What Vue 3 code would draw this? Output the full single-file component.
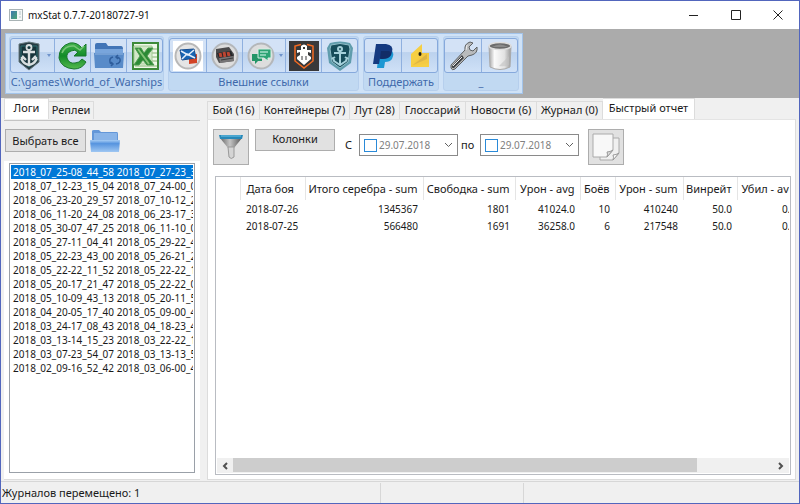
<template>
  <div class="window">
    <header class="titlebar">
      <svg class="app-icon" width="14" height="12" viewBox="0 0 14 12">
        <defs>
          <linearGradient id="app-fill" x1="0" y1="0" x2="1" y2="1">
            <stop offset="0" stop-color="#3f78b0" />
            <stop offset="1" stop-color="#4ca673" />
          </linearGradient>
        </defs>
        <rect x="0.5" y="0.5" width="13" height="11" fill="#f5f7f7" stroke="#a9b3b5" />
        <rect x="2" y="2" width="6" height="8" fill="url(#app-fill)" />
        <path d="M10 3h2M10 5h2M10 8h2" stroke="#b6c6c9" />
      </svg>
      <h1 class="title">mxStat 0.7.7-20180727-91</h1>
      <div class="window-controls">
        <button type="button" aria-label="Свернуть">
          <svg width="12" height="12" viewBox="0 0 12 12"><path d="M1 6.5h9" /></svg>
        </button>
        <button type="button" aria-label="Развернуть">
          <svg width="12" height="12" viewBox="0 0 12 12"><path d="M1.500 1.500h9v9h-9z" /></svg>
        </button>
        <button type="button" aria-label="Закрыть">
          <svg width="12" height="12" viewBox="0 0 12 12"><path d="M1.500 1.500l9 9M10.500 1.500l-9 9" /></svg>
        </button>
      </div>
    </header>

    <div class="ribbon-area">
      <div class="ribbon">
        <section class="group">
          <div class="tools">
            <button type="button" class="tool with-arrow" aria-label="Клиент игры">
              <svg width="30" height="30" viewBox="0 0 30 30">
                <path d="M5 3l10-2 10 2v18l-10 8-10-8z" fill="#263b43" stroke="#687b80" />
                <path d="M7 5h16v15l-8 6-8-6z" fill="#17343b" stroke="#2d6f73" />
                <circle cx="15" cy="6.500" r="2.500" fill="none" stroke="#d9dfe0" stroke-width="1.800" />
                <path d="M15 9v15M9 11h12M8 16v3q2 4 7 5q5-1 7-5v-3M7 19l2-3 3 3M18 19l3-3 2 3" fill="none" stroke="#d9dfe0" stroke-width="2.400" />
              </svg>
              <span class="arrow"></span>
            </button>
            <button type="button" class="tool" aria-label="Обновить">
              <svg width="30" height="30" viewBox="0 0 30 30">
                <defs>
                  <linearGradient id="green-fill" x1="0" y1="0" x2="0" y2="1">
                    <stop offset="0" stop-color="#43b34d" />
                    <stop offset="0.500" stop-color="#118b27" />
                    <stop offset="1" stop-color="#54b94f" />
                  </linearGradient>
                </defs>
                <path d="M28 3v12H16l4-4q-3-3-7-1q-5 2-4 7q2 6 8 5q4 0 7-4l4 3q-4 7-12 7Q3 27 1 17Q1 5 12 2q7-1 12 5z" fill="url(#green-fill)" stroke="#18762c" />
                <path d="M4 12q3-8 12-7l6 4 4-4" fill="none" stroke="#78c678" stroke-width="1.500" />
              </svg>
            </button>
            <button type="button" class="tool" aria-label="Папка журналов">
              <svg width="30" height="30" viewBox="0 0 30 30">
                <path d="M1 4q0-2 2-2h9l2 3h13q2 0 2 3v19H1z" fill="#4275b7" />
                <path d="M1 8h28v5H1z" fill="#78a5dc" />
                <path d="M0 12h30l-1 15H1z" fill="#588bc9" />
                <path d="M1 13h28" stroke="#8eb3e0" />
                <path d="M19 16q-4 1-3 5q0 2 3 2M17 25l2-2-2-2M22 23q5-1 4-5q-1-2-4-2M24 14l-2 2 2 2" fill="none" stroke="#2e5d9c" stroke-width="1.500" />
              </svg>
            </button>
            <button type="button" class="tool" aria-label="Экспорт в Excel">
              <svg width="30" height="30" viewBox="0 0 30 30">
                <rect x="3" y="2" width="25" height="26" fill="#eff7e9" stroke="#3d8a3a" stroke-width="2" />
                <path d="M22 8h5M22 12h5M22 16h5M22 20h5M5 25h22" stroke="#86b674" />
                <path d="M4 5h18v18H4z" fill="#d3e8c9" stroke="#a4cc96" />
                <path d="M5 7h6l3 5 4-5h5l-6 8 7 9h-7l-4-5-4 5H4l6-9z" fill="#2b8a36" stroke="#4f9c50" />
                <path d="M8 8l11 15" stroke="#86c478" stroke-width="2" />
              </svg>
            </button>
          </div>
          <span class="group-label">C:\games\World_of_Warships</span>
        </section>

        <section class="group">
          <div class="tools">
            <button type="button" class="tool" aria-label="Почта">
              <svg width="30" height="30" viewBox="0 0 30 30">
                <rect width="30" height="30" fill="#fff" />
                <circle cx="15" cy="15" r="12.500" fill="#e5e5e5" stroke="#b8b8b8" stroke-width="2" />
                <path d="M16 15l8-2v9l-8 1z" fill="#d24325" />
                <path d="M7 9l14-1 2 9-14 2z" fill="#1765b4" stroke="#164d90" />
                <path d="M8 10l7 4 6-5M9 18l5-5 8 4" fill="none" stroke="#e3eefa" stroke-width="1.500" />
              </svg>
            </button>
            <button type="button" class="tool" aria-label="Контейнеры">
              <svg width="30" height="30" viewBox="0 0 30 30">
                <circle cx="15" cy="15" r="12.500" fill="#ddd" stroke="#b4b7ba" stroke-width="2" />
                <path d="M6 8l13-2 5 7v7l-15 2-3-6z" fill="#4b4a4b" />
                <path d="M7 12l14-2 2 5-14 2z" fill="#252729" />
                <path d="M10 12l1 4M14 11l1 5M18 11l1 4" stroke="#bb4532" stroke-width="3" />
                <path d="M9 17l15-2v5l-14 2z" fill="#777576" />
                <path d="M11 19l12-2" stroke="#393a3b" />
              </svg>
            </button>
            <button type="button" class="tool with-arrow" aria-label="Форум">
              <svg width="30" height="30" viewBox="0 0 30 30">
                <circle cx="15" cy="15" r="12.500" fill="#ddd" stroke="#b4b7ba" stroke-width="2" />
                <path d="M6 13h10v7h-4l-3 3v-3H6z" fill="#249567" />
                <path d="M12 8h13v9h-3v3l-4-3h-6z" fill="#2ca374" stroke="#d6eee4" />
                <path d="M14 11h8M14 14h6" stroke="#a4dec8" stroke-width="1.500" />
              </svg>
              <span class="arrow"></span>
            </button>
            <button type="button" class="tool" aria-label="Сайт статистики">
              <svg width="30" height="30" viewBox="0 0 30 30">
                <rect width="30" height="30" fill="#38383a" />
                <path d="M12 3.500L6 5v15l9 7 9-7V5l-6-1.500" fill="none" stroke="#f36a22" stroke-width="1.500" />
                <path d="M12 5q3-3 6 0v4h4v9l-7 6-7-6V9h4z" fill="#fff" />
                <path d="M8 12l3-1v3l-3 2zM22 12l-3-1v3l3 2z" fill="#38383a" />
                <path d="M14 6h2v2h-2z" fill="#38383a" />
                <path d="M13 15v4M17 15v4" stroke="#38383a" />
              </svg>
            </button>
            <button type="button" class="tool" aria-label="Портал">
              <svg width="30" height="30" viewBox="0 0 30 30">
                <path d="M5 2q10-3 20 0l3 5-2 15-11 8-11-8L2 7z" fill="#5f9cac" />
                <path d="M6 4q9-3 18 0l1 4-2 13-8 6-8-6L5 8z" fill="#164c5a" stroke="#90bec9" />
                <circle cx="15" cy="8" r="2" fill="none" stroke="#a5d0da" stroke-width="2" />
                <path d="M15 10v14M9 12h12M8 16l1 4 6 4 6-4 1-4M7 18l3-2M20 16l3 2" fill="none" stroke="#a5d0da" stroke-width="2" />
              </svg>
            </button>
          </div>
          <span class="group-label">Внешние ссылки</span>
        </section>

        <section class="group">
          <div class="tools">
            <button type="button" class="tool" aria-label="PayPal">
              <svg width="30" height="30" viewBox="0 0 30 30">
                <path d="M11 9h12q4 3 1 9q-2 3-7 3l-1 6h-7z" fill="#1d98d3" />
                <path d="M8 3h10q8 1 6 8q-1 6-9 6h-3l-1 6H5z" fill="#153a80" />
                <path d="M13 10h8q3 2 2 4-2 4-8 4h-3z" fill="#122d67" />
              </svg>
            </button>
            <button type="button" class="tool" aria-label="Яндекс.Деньги">
              <svg width="30" height="30" viewBox="0 0 30 30">
                <path d="M6 13L17 3v10h7v13H6z" fill="#f6cf43" />
                <path d="M8 24l14-11-2 7-12 4z" fill="#d6a72e" />
                <path d="M17 12h7v10L7 25z" fill="#f4ca43" />
                <path d="M8 24l14-6v-5z" fill="#c6a047" opacity="0.500" />
                <ellipse cx="15" cy="13" rx="1.500" ry="2" fill="#242116" />
              </svg>
            </button>
          </div>
          <span class="group-label">Поддержать</span>
        </section>

        <section class="group">
          <div class="tools">
            <button type="button" class="tool" aria-label="Настройки">
              <svg width="30" height="30" viewBox="0 0 30 30">
                <path d="M3 24L17 9q-1-6 5-8l3 1-4 4 1 3 3 1 4-4q1 6-5 8l-4 1L7 28q-3 2-4-1z" fill="#b9bbbd" stroke="#5d6062" />
                <path d="M4 25L14 14l2 3L6 27q-3 0-2-2z" fill="#3e4144" />
                <path d="M5 25l9-9M18 9l1-5" stroke="#eee" />
              </svg>
            </button>
            <button type="button" class="tool" aria-label="Очистить">
              <svg width="30" height="30" viewBox="0 0 30 30">
                <defs>
                  <linearGradient id="bin-fill">
                    <stop offset="0" stop-color="#a5a5a5" />
                    <stop offset="0.250" stop-color="#fafafa" />
                    <stop offset="0.700" stop-color="#e2e2e2" />
                    <stop offset="1" stop-color="#999" />
                  </linearGradient>
                </defs>
                <path d="M4 5h22l-1 21q-10 5-20 0z" fill="url(#bin-fill)" stroke="#aaa" />
                <ellipse cx="15" cy="5" rx="11" ry="3.500" fill="#6b6b6b" stroke="#ddd" stroke-width="1.500" />
                <path d="M7 6q8-5 16 0" fill="#8b8b8b" />
                <path d="M14 25l10-10v9q-5 2-10 1z" fill="#c2c2c2" opacity="0.600" />
              </svg>
            </button>
          </div>
          <span class="group-label">_</span>
        </section>
      </div>
    </div>

    <main class="workspace">
      <aside class="logs">
        <nav class="tabs log-tabs">
          <button type="button" class="tab active">Логи</button>
          <button type="button" class="tab">Реплеи</button>
        </nav>
        <div class="logs-toolbar">
          <button type="button" class="push select-all">Выбрать все</button>
          <button type="button" class="open-folder" aria-label="Открыть папку">
            <svg width="30" height="26" viewBox="0 0 30 26">
              <defs>
                <linearGradient id="folder-fill" x1="0" y1="0" x2="0" y2="1">
                  <stop offset="0" stop-color="#a6ccf4" />
                  <stop offset="0.300" stop-color="#5694df" />
                  <stop offset="1" stop-color="#9fc7f2" />
                </linearGradient>
              </defs>
              <path d="M2 12V2q0-1 2-1h5l2 2h16q1 0 1 2v7z" fill="#6497d8" />
              <path d="M4 4h23v8H4z" fill="#89b4e8" />
              <path d="M0 11h30l-1 12H1z" fill="url(#folder-fill)" />
            </svg>
          </button>
        </div>
        <div class="logs-body">
          <ul class="log-list" role="listbox" aria-label="Логи">
            <li
              v-for="(log, index) in logs"
              :key="log"
              role="option"
              :aria-selected="index === selectedLog"
              :class="{ selected: index === selectedLog }"
              @click="selectedLog = index"
            >{{ log }}</li>
          </ul>
        </div>
      </aside>

      <section class="report">
        <nav class="tabs report-tabs">
          <button
            v-for="tab in tabs"
            :key="tab"
            type="button"
            class="tab"
            :class="{ active: tab === activeTab }"
            @click="activeTab = tab"
          >{{ tab }}</button>
        </nav>
        <div class="report-page">
          <div class="filters">
            <button type="button" class="push square" aria-label="Фильтр">
              <svg width="26" height="28" viewBox="0 0 26 28">
                <defs>
                  <linearGradient id="funnel-fill">
                    <stop offset="0" stop-color="#666" />
                    <stop offset="0.450" stop-color="#c4c4c4" />
                    <stop offset="1" stop-color="#555" />
                  </linearGradient>
                </defs>
                <path d="M2 5h22l-8 10H10z" fill="url(#funnel-fill)" />
                <path d="M10 14h6v10q-3 3-5 0z" fill="#d4d4d4" stroke="#999" />
                <path d="M1 2h24l-1 4H2z" fill="#2788b8" />
                <path d="M3 3h20" stroke="#70c5e8" />
              </svg>
            </button>
            <button type="button" class="push columns">Колонки</button>
            <label class="date-label from" for="date-from">С</label>
            <div class="date-box">
              <input v-model="fromEnabled" type="checkbox" aria-label="Учитывать начальную дату" />
              <input id="date-from" v-model="dateFrom" class="date" type="text" />
              <button type="button" class="chevron" aria-label="Выбрать начальную дату">
                <svg width="9" height="6" viewBox="0 0 9 6"><path d="M1 1l3.500 3.500L8 1" /></svg>
              </button>
            </div>
            <label class="date-label to" for="date-to">по</label>
            <div class="date-box">
              <input v-model="toEnabled" type="checkbox" aria-label="Учитывать конечную дату" />
              <input id="date-to" v-model="dateTo" class="date" type="text" />
              <button type="button" class="chevron" aria-label="Выбрать конечную дату">
                <svg width="9" height="6" viewBox="0 0 9 6"><path d="M1 1l3.500 3.500L8 1" /></svg>
              </button>
            </div>
            <button type="button" class="push square copy" aria-label="Копировать">
              <svg width="30" height="30" viewBox="0 0 30 30">
                <path d="M9 6h19v15l-6 7H9z" fill="#f0f0f0" stroke="#aaa" />
                <path d="M22 28q1-3 0-5 3 0 6-2z" fill="#fff" stroke="#999" />
                <path d="M2 2h20v16l-6 7H2z" fill="#f8f8f8" stroke="#aaa" />
                <path d="M16 25q1-3 0-5 3 0 6-2z" fill="#ddd" stroke="#999" />
              </svg>
            </button>
          </div>

          <div class="grid">
            <div class="grid-view">
              <table>
                <colgroup>
                  <col v-for="name in columnNames" :key="name" :class="'col-' + name" />
                </colgroup>
                <thead>
                  <tr>
                    <th></th>
                    <th v-for="header in headers" :key="header">{{ header }}</th>
                  </tr>
                </thead>
                <tbody>
                  <tr v-for="row in rows" :key="row[0]">
                    <td></td>
                    <td v-for="(cell, index) in row" :key="index">{{ cell }}</td>
                  </tr>
                </tbody>
              </table>
            </div>
            <div class="scrollbar">
              <button type="button" aria-label="Прокрутить влево">
                <svg width="6" height="8" viewBox="0 0 6 8"><path d="M5 1L2 4l3 3" /></svg>
              </button>
              <div class="track"><div class="thumb"></div></div>
              <button type="button" aria-label="Прокрутить вправо">
                <svg width="6" height="8" viewBox="0 0 6 8"><path d="M1 1l3 3-3 3" /></svg>
              </button>
            </div>
          </div>
        </div>
      </section>
    </main>

    <footer class="statusbar">
      <span>Журналов перемещено: 1</span>
      <span></span>
      <span></span>
    </footer>
  </div>
</template>

<script setup>
import { ref } from 'vue';

const logs = [
  '2018_07_25-08_44_58 2018_07_27-23_3',
  '2018_07_12-23_15_04 2018_07_24-00_0',
  '2018_06_23-20_29_57 2018_07_10-12_2',
  '2018_06_11-20_24_08 2018_06_23-17_3',
  '2018_05_30-07_47_25 2018_06_11-10_0',
  '2018_05_27-11_04_41 2018_05_29-22_4',
  '2018_05_22-23_43_00 2018_05_26-21_2',
  '2018_05_22-22_11_52 2018_05_22-22_1',
  '2018_05_20-17_21_47 2018_05_22-22_0',
  '2018_05_10-09_43_13 2018_05_20-11_5',
  '2018_04_20-05_17_40 2018_05_09-00_4',
  '2018_03_24-17_08_43 2018_04_18-23_4',
  '2018_03_13-14_15_23 2018_03_22-22_1',
  '2018_03_07-23_54_07 2018_03_13-13_5',
  '2018_02_09-16_52_42 2018_03_06-00_4',
];
const selectedLog = ref(0);

const tabs = [
  'Бой (16)',
  'Контейнеры (7)',
  'Лут (28)',
  'Глоссарий',
  'Новости (6)',
  'Журнал (0)',
  'Быстрый отчет',
];
const activeTab = ref('Быстрый отчет');

const fromEnabled = ref(false);
const toEnabled = ref(false);
const dateFrom = ref('29.07.2018');
const dateTo = ref('29.07.2018');

const columnNames = ['mark', 'date', 'silver', 'xp', 'avg', 'battles', 'damage', 'wins', 'kills'];
const headers = [
  'Дата боя',
  'Итого серебра - sum',
  'Свободка - sum',
  'Урон - avg',
  'Боёв',
  'Урон - sum',
  'Винрейт',
  'Убил - avg',
];
const rows = [
  ['2018-07-26', '1345367', '1801', '41024.0', '10', '410240', '50.0', '0.0'],
  ['2018-07-25', '566480', '1691', '36258.0', '6', '217548', '50.0', '0.0'],
];
</script>

<style>
body {
  margin: 0;
}
</style>

<style scoped>
.window {
  box-sizing: border-box;
  min-height: 100vh;
  display: flex;
  flex-direction: column;
  border: 1px solid #5266bd;
  background: #f0f0f0;
  color: #1a1a1a;
  font-family: 'Noto Sans', 'Open Sans', sans-serif;
  font-size: 11px;
  line-height: 14px;
}

.window *,
.window *::before {
  box-sizing: border-box;
}

button,
input {
  margin: 0;
  padding: 0;
  border: 0;
  background: none;
  color: inherit;
  font: inherit;
}

svg {
  display: block;
  flex: none;
}

/* title bar */
.titlebar {
  display: flex;
  align-items: center;
  height: 28px;
  padding-left: 8px;
  background: #fff;
}

.title {
  flex: 1;
  margin: 0;
  padding-left: 5px;
  font-size: 10px;
  font-weight: 400;
  color: #111;
}

.window-controls {
  display: flex;
}

.window-controls button {
  width: 42px;
  height: 28px;
  display: flex;
  align-items: center;
  justify-content: center;
}

.window-controls path {
  fill: none;
  stroke: #222;
}

/* ribbon */
.ribbon-area {
  display: flex;
  height: 69px;
  padding: 4px;
  background: #ababab;
}

.ribbon {
  display: flex;
  gap: 4px;
  height: 61px;
  padding: 2px 3px;
  border: 1px solid #a3c4ea;
  background: #cfe2f7;
}

.group {
  display: flex;
  flex-direction: column;
  align-items: center;
  padding: 1px 0;
  border: 1px solid #b6cfed;
  border-radius: 3px;
  background: #c1d9f2;
}

.tools {
  display: flex;
  border: 1px solid #86a9dc;
  border-radius: 3px;
  background: linear-gradient(#d3e2f6 0 40%, #bcd2ee 41%, #cfe1f7);
}

.tool {
  width: 36px;
  height: 33px;
  display: flex;
  align-items: center;
  justify-content: center;
}

.tool + .tool {
  border-left: 1px solid #8fb0df;
}

.with-arrow {
  width: 43px;
  gap: 3px;
}

.arrow {
  border: 2px solid transparent;
  border-top: 3px solid #6e93cb;
  border-bottom: 0;
}

.group-label {
  color: #3f69ab;
  line-height: 17px;
}

/* panes */
.workspace {
  flex: 1;
  display: grid;
  grid-template-columns: 196px minmax(0, 1fr);
  gap: 7px;
  padding: 0 3px 1px;
}

.logs,
.report {
  display: flex;
  flex-direction: column;
  min-width: 0;
}

.tabs {
  display: flex;
  align-items: flex-end;
}

.tab {
  height: 18px;
  padding-bottom: 2px;
  border: 1px solid #dcdcdc;
  border-bottom: 0;
  white-space: nowrap;
}

.tab + .tab {
  border-left: 0;
}

.tab.active {
  height: 21px;
  background: #fff;
}

.log-tabs {
  height: 22px;
  padding-bottom: 1px;
}

.log-tabs .tab {
  width: 45px;
}

.logs-toolbar {
  display: flex;
  gap: 4px;
  height: 41px;
  padding: 8px 1px 0;
  border-top: 1px solid #c4c4c4;
}

.push {
  border: 1px solid #adadad;
  background: #e1e1e1;
}

.select-all {
  width: 81px;
  height: 23px;
}

.open-folder {
  height: 26px;
}

.logs-body {
  flex: 1;
  display: flex;
  padding: 2px 5px 6px;
  border-bottom: 1px solid #dcdcdc;
  background: #fff;
}

.log-list {
  flex: 1;
  min-width: 0;
  margin: 0;
  padding: 1px;
  border: 1px solid #9aa0a8;
  list-style: none;
  overflow: hidden;
  font-size: 10px;
}

.log-list li {
  padding-left: 2px;
  white-space: nowrap;
  overflow: hidden;
}

.log-list .selected {
  background: #0078d7;
  color: #fff;
}

/* report */
.report-tabs {
  display: grid;
  grid-template-columns: 53px 90px 50px 66px 71px 66px 92px;
  height: 21px;
}

.report-page {
  flex: 1;
  display: flex;
  flex-direction: column;
  gap: 11px;
  padding: 9px 4px 4px 7px;
  border: 1px solid #dcdcdc;
  border-top-color: #e4e4e4;
  background: #fff;
}

.filters {
  display: flex;
  align-items: flex-start;
  margin-left: -2px;
}

.square {
  width: 36px;
  height: 36px;
  display: flex;
  align-items: center;
  justify-content: center;
}

.columns {
  width: 80px;
  height: 22px;
  margin-left: 6px;
  padding-bottom: 2px;
}

.date-label {
  padding-top: 9px;
}

.from {
  width: 24px;
  padding-left: 10px;
}

.to {
  width: 22px;
  padding-left: 3px;
}

.date-box {
  display: flex;
  align-items: center;
  width: 99px;
  height: 22px;
  margin-top: 5px;
  padding: 0 4px;
  border: 1px solid #8a8a8a;
}

.date-box input[type='checkbox'] {
  appearance: none;
  flex: none;
  width: 13px;
  height: 13px;
  border: 1px solid #2a8ad8;
}

.date {
  flex: 1;
  min-width: 0;
  padding-left: 2px;
  color: #808080;
  font-size: 10px;
}

.chevron path {
  fill: none;
  stroke: #606060;
}

.copy {
  margin-left: 9px;
}

.grid {
  flex: 1;
  display: flex;
  flex-direction: column;
  min-width: 0;
  padding: 0 1px 1px;
  border: 1px solid #b9bcc2;
}

.grid-view {
  flex: 1;
  overflow: hidden;
}

table {
  width: 584px;
  table-layout: fixed;
  border-collapse: collapse;
}

.col-mark {
  width: 23px;
}

.col-date {
  width: 65px;
}

.col-silver {
  width: 118px;
}

.col-xp {
  width: 92px;
}

.col-avg {
  width: 65px;
}

.col-battles {
  width: 35px;
}

.col-damage {
  width: 68px;
}

.col-wins {
  width: 54px;
}

.col-kills {
  width: 64px;
}

th,
td {
  padding: 0 5px 0 0;
  text-align: right;
  font-weight: 400;
  white-space: nowrap;
}

th {
  height: 23px;
  border-right: 1px solid #e5e5e5;
}

td {
  height: 17px;
  font-size: 10px;
}

th:nth-child(2),
td:nth-child(2) {
  padding-left: 6px;
  text-align: left;
}

.scrollbar {
  display: flex;
  height: 15px;
  background: #f0f0f0;
}

.scrollbar button {
  width: 16px;
  display: flex;
  align-items: center;
  justify-content: center;
}

.scrollbar path {
  fill: none;
  stroke: #505050;
  stroke-width: 2;
}

.track {
  flex: 1;
}

.thumb {
  width: 86%;
  height: 14px;
  background: #cdcdcd;
}

/* status bar */
.statusbar {
  display: grid;
  grid-template-columns: 379px 143px 1fr;
  height: 22px;
  padding-top: 1px;
  border-top: 1px solid #d7d7d7;
  line-height: 20px;
}

.statusbar span {
  padding-left: 1px;
}

.statusbar span + span {
  border-left: 1px solid #d7d7d7;
}
</style>
